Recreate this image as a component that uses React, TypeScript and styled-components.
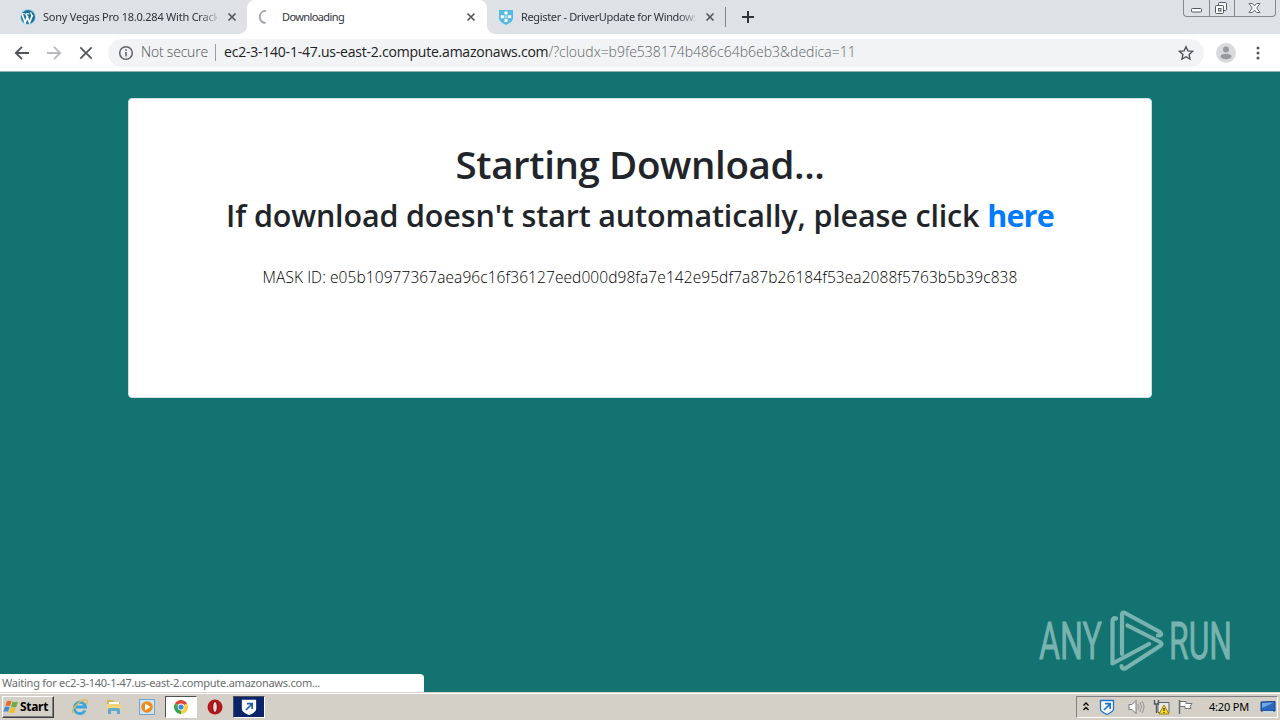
import React from 'react';
import styled, { createGlobalStyle } from 'styled-components';

const GlobalStyle = createGlobalStyle`
  * {
    box-sizing: border-box;
  }

  body {
    margin: 0;
    overflow: hidden;
    font-family: 'Open Sans', 'Noto Sans', sans-serif;
  }
`;

// Styled components
const Screen = styled.div`
  display: flex;
  flex-direction: column;
  width: 1280px;
  height: 720px;
  background: #fff;
`;

const TabStrip = styled.div`
  display: flex;
  height: 34px;
  background: #dee1e6;
`;

const Tab = styled.div<{ $width: number; $left: number; $right: number; $active?: boolean }>`
  display: flex;
  align-items: center;
  width: ${(props) => props.$width}px;
  height: 34px;
  padding: 0 ${(props) => props.$right}px 0 ${(props) => props.$left}px;
  border-radius: 8px 8px 0 0;
  background: ${(props) => (props.$active ? '#fff' : 'transparent')};
`;

// the corner of an idle tab curves into the active one
const TabFoot = styled.div<{ $side: 'left' | 'right' }>`
  width: 8px;
  height: 34px;
  background: radial-gradient(
      circle at ${(props) => (props.$side === 'left' ? '0 0' : '100% 0')},
      transparent 7.5px,
      #fff 8px
    )
    0 26px / 8px 8px no-repeat;
`;

const TabIcon = styled.svg`
  flex: none;
  width: 16px;
  height: 16px;
`;

const TabTitle = styled.div<{ $gap: number; $spacing: number; $fade?: boolean }>`
  flex: none;
  width: 174px;
  margin-left: ${(props) => props.$gap}px;
  overflow: hidden;
  white-space: nowrap;
  font: 11px/16px 'Noto Sans', sans-serif;
  letter-spacing: ${(props) => props.$spacing}px;
  color: #303338;
  mask-image: ${(props) =>
    props.$fade ? 'linear-gradient(90deg, #000 90%, rgba(0, 0, 0, 0.2))' : 'none'};
`;

const TabClose = styled.svg`
  flex: none;
  width: 10px;
  height: 10px;
  margin-left: auto;
`;

const TabDivider = styled.div`
  width: 1px;
  height: 20px;
  margin: 7px 15px 0 0;
  background: #808388;
`;

const NewTab = styled.svg`
  width: 14px;
  height: 14px;
  margin-top: 10px;
`;

const WindowButtons = styled.div`
  display: flex;
  height: 17px;
  margin: 0 4px 0 auto;
  border: 1px solid #85888d;
  border-top: 0;
  border-radius: 0 0 4px 4px;
`;

const WindowButton = styled.div<{ $width: number }>`
  display: flex;
  justify-content: center;
  width: ${(props) => props.$width}px;

  & + & {
    border-left: 1px solid #85888d;
  }
`;

const Toolbar = styled.div`
  display: flex;
  align-items: center;
  height: 38px;
  padding-left: 14px;
  border-bottom: 1px solid #8eb2b2;
  background: #fff;
`;

const NavIcon = styled.svg`
  width: 16px;
  height: 16px;
  margin-right: 16px;
`;

const AddressBar = styled.div`
  display: flex;
  align-items: center;
  width: 1096px;
  height: 28px;
  margin-left: -2px;
  padding: 0 10px;
  border-radius: 14px;
  background: #f1f3f4;
  font-size: 14px;
  font-weight: 300;
  white-space: nowrap;
`;

const NotSecure = styled.span`
  width: 68px;
  margin-left: 7px;
  padding-bottom: 2px;
  letter-spacing: -0.2px;
  color: #4e5257;
`;

const AddressDivider = styled.div`
  width: 1px;
  height: 17px;
  margin: 0 8px 0 6px;
  background: #9a9da1;
`;

const Url = styled.span`
  padding-bottom: 2px;
  letter-spacing: 0;
  color: #5f6368;
`;

const UrlHost = styled.span`
  font-weight: 400;
  letter-spacing: -0.22px;
  color: #202124;
`;

const Star = styled.svg`
  width: 16px;
  height: 16px;
  margin-left: auto;
`;

const Avatar = styled.svg`
  width: 20px;
  height: 20px;
  margin: 0 19px 0 12px;
`;

const Menu = styled.svg`
  width: 6px;
  height: 16px;
`;

const Page = styled.main`
  position: relative;
  display: flex;
  justify-content: center;
  height: 620px;
  padding-top: 26px;
  background: #127370;
`;

const Card = styled.section`
  width: 1024px;
  height: 300px;
  padding-top: 41px;
  border: 1px solid #cfe0df;
  border-radius: 4px;
  background: #fff;
  text-align: center;
  white-space: nowrap;
  color: #212529;
`;

const Title = styled.h1`
  margin: 0 0 8px;
  font-size: 38.5px;
  font-weight: 600;
  line-height: 48px;
  letter-spacing: -0.4px;
`;

const Subtitle = styled.h2`
  margin: 0;
  font-size: 30.5px;
  font-weight: 600;
  line-height: 38px;
  letter-spacing: -0.16px;
`;

const HereLink = styled.a`
  font-weight: 700;
  letter-spacing: -0.8px;
  color: #007bff;
`;

const MaskId = styled.p`
  margin: 31px 0 0;
  font-size: 15.5px;
  font-weight: 300;
  line-height: 24px;
  letter-spacing: 0.08px;
  color: #000;
`;

const Watermark = styled.svg`
  position: absolute;
  left: 1020px;
  top: 528px;
  width: 240px;
  height: 90px;
  overflow: visible;
`;

const StatusBubble = styled.div`
  position: absolute;
  left: 0;
  bottom: 0;
  width: 424px;
  height: 18px;
  padding-left: 2px;
  border-radius: 0 4px 0 0;
  background: #fff;
  font: 11px/18px 'Noto Sans', sans-serif;
  letter-spacing: -0.25px;
  color: #6a6d70;
`;

const Taskbar = styled.footer`
  display: flex;
  height: 28px;
  padding: 3px 2px 0;
  border-top: 1px solid #d6d2ca;
  background: #d4d0c8;
  box-shadow: inset 0 1px #fff;
`;

const StartButton = styled.div`
  display: flex;
  align-items: center;
  width: 52px;
  height: 22px;
  margin-right: 14px;
  padding-bottom: 1px;
  border: 1px solid;
  border-color: #fff #404040 #404040 #fff;
  box-shadow: inset -1px -1px #808080;
  font: bold 12px 'Noto Sans', sans-serif;
  letter-spacing: -0.3px;
  color: #000;
`;

const StartFlag = styled.svg`
  flex: none;
  width: 17px;
  height: 18px;
`;

const TaskItem = styled.div<{ $width: number; $gap?: number; $pressed?: boolean; $background?: string }>`
  display: flex;
  align-items: center;
  justify-content: center;
  width: ${(props) => props.$width}px;
  height: 22px;
  margin-left: ${(props) => props.$gap || 0}px;
  border: 1px solid;
  border-color: ${(props) => (props.$pressed ? '#505050 #fff #fff #505050' : 'transparent')};
  background: ${(props) => props.$background || 'transparent'};
`;

const TaskIcon = styled.svg`
  width: 18px;
  height: 18px;
`;

const Tray = styled.div`
  display: flex;
  align-items: center;
  width: 202px;
  height: 22px;
  margin-left: auto;
  padding-left: 6px;
  border: 1px solid;
  border-color: #808080 #fff #fff #808080;
`;

const TrayIcon = styled.svg<{ $width: number; $gap: number }>`
  flex: none;
  width: ${(props) => props.$width}px;
  height: 18px;
  margin-right: ${(props) => props.$gap}px;
`;

const Clock = styled.span`
  width: 42px;
  margin-right: 9px;
  padding-bottom: 1px;
  font: 11px 'Noto Sans', sans-serif;
  letter-spacing: -0.2px;
  white-space: nowrap;
  color: #000;
`;

const CloseMark: React.FC = () => (
  <TabClose viewBox="0 0 10 10">
    <path d="M1.5 1.5l7 7M8.5 1.5l-7 7" stroke="#55585c" strokeWidth="1.7" />
  </TabClose>
);

interface ShieldArrowProps {
  stroke: string;
  arrow: string;
}

const ShieldArrow: React.FC<ShieldArrowProps> = ({ stroke, arrow }) => (
  <>
    <path d="M2.5 2.5h13v8.5c0 2.5-3 4-6.5 5.5C5.5 15 2.5 13.5 2.5 11z" fill="#fff" stroke={stroke} strokeWidth="1.3" />
    <path d="M6 12l5.5-5.5M7 5.7h5.2V11" fill="none" stroke={arrow} strokeWidth="1.7" />
  </>
);

const Tabs: React.FC = () => (
  <TabStrip>
    <Tab $width={239} $left={20} $right={2}>
      <TabIcon viewBox="0 0 16 16">
        <circle cx="8" cy="8" r="8" fill="#a9d5e7" />
        <circle cx="8" cy="8" r="7" fill="#1e7299" />
        <path d="M2 5l3.2 8.5L7.7 7M6 5l3.5 8.5L12.5 6" fill="none" stroke="#fff" strokeWidth="1.7" />
        <path d="M1.5 4.8h3.8M6 4.8h3.5" stroke="#fff" strokeWidth="1" />
        <path d="M11 3.3c-.8 1.5 1.3 2.2 1.2 4" fill="none" stroke="#fff" strokeWidth="1.2" />
      </TabIcon>
      <TabTitle $gap={7} $spacing={-0.23} $fade>
        Sony Vegas Pro 18.0.284 With Crack
      </TabTitle>
      <CloseMark />
    </Tab>
    <TabFoot $side="left" />
    <Tab $width={240} $left={10} $right={11} $active>
      <TabIcon viewBox="0 0 16 16">
        <path d="M9 2C5 1.5 2.5 5 2.700 8.500Q3.500 13.500 8.500 14" fill="none" stroke="#a1a4a8" strokeWidth="1.8" />
      </TabIcon>
      <TabTitle $gap={9} $spacing={-0.6}>
        Downloading
      </TabTitle>
      <CloseMark />
    </Tab>
    <TabFoot $side="right" />
    <Tab $width={230} $left={3} $right={10}>
      <TabIcon viewBox="0 0 16 16">
        <path d="M1 1h14v8c0 3-3 5-7 7-4-2-7-4-7-7z" fill="#55b9e2" />
        <path d="M6.5 2.5h3v3h-3zM2.8 6.3h3v3h-3zM10.2 6.3h3v3h-3zM6.5 10h3v3h-3z" fill="#fff" />
        <path d="M6.5 6.3h3v3h-3z" fill="#a9dcf1" />
      </TabIcon>
      <TabTitle $gap={7} $spacing={-0.34} $fade>
        Register - DriverUpdate for Windows
      </TabTitle>
      <CloseMark />
    </Tab>
    <TabDivider />
    <NewTab viewBox="0 0 14 14">
      <path d="M7 1v12M1 7h12" stroke="#303337" strokeWidth="2" />
    </NewTab>
    <WindowButtons>
      <WindowButton $width={25}>
        <svg width="13" height="16">
          <rect x="1.5" y="8.5" width="10" height="3.5" rx="1" fill="#fff" stroke="#55585e" />
        </svg>
      </WindowButton>
      <WindowButton $width={25}>
        <svg width="16" height="16">
          <rect x="4.5" y="2.5" width="8" height="8" rx="1" fill="#f5f6f7" stroke="#55585e" />
          <rect x="1.5" y="5.5" width="8" height="8" rx="1" fill="#fff" stroke="#55585e" />
          <rect x="4.5" y="8.5" width="2.5" height="2.5" fill="#dee1e6" stroke="#55585e" />
        </svg>
      </WindowButton>
      <WindowButton $width={41}>
        <svg width="15" height="16">
          <path d="M1 3.5h3.5l2 2.5 2-2.5H12L8.7 8l3.3 4.5H8.5l-2-2.5-2 2.5H1L4.3 8z" fill="#fff" stroke="#666970" />
        </svg>
      </WindowButton>
    </WindowButtons>
  </TabStrip>
);

const BrowserToolbar: React.FC = () => (
  <Toolbar>
    <NavIcon viewBox="0 0 16 16">
      <path d="M15 8H2M8 1.8L1.8 8 8 14.2" fill="none" stroke="#505357" strokeWidth="1.8" />
    </NavIcon>
    <NavIcon viewBox="0 0 16 16">
      <path d="M1 8h13M8 1.8L14.2 8 8 14.2" fill="none" stroke="#b9bbbe" strokeWidth="1.8" />
    </NavIcon>
    <NavIcon viewBox="0 0 16 16">
      <path d="M2.3 2.3l11.4 11.4M13.7 2.3L2.3 13.7" stroke="#505357" strokeWidth="1.7" />
    </NavIcon>
    <AddressBar>
      <svg width="16" height="16" viewBox="0 0 16 16">
        <circle cx="8" cy="8" r="6.3" fill="none" stroke="#5f6368" strokeWidth="1.5" />
        <path d="M8 4.2v1.6M8 7v4.6" stroke="#5f6368" strokeWidth="1.6" />
      </svg>
      <NotSecure>Not secure</NotSecure>
      <AddressDivider />
      <Url>
        <UrlHost>ec2-3-140-1-47.us-east-2.compute.amazonaws.com</UrlHost>
        /?cloudx=b9fe538174b486c64b6eb3&amp;dedica=11
      </Url>
      <Star viewBox="0 0 16 16">
        <path d="M8 1.7l1.9 4.2 4.6.5-3.4 3.1.9 4.5-4-2.3L4 14l.9-4.5L1.5 6.4l4.6-.5z" fill="none" stroke="#505459" strokeWidth="1.4" />
      </Star>
    </AddressBar>
    <Avatar viewBox="0 0 20 20">
      <circle cx="10" cy="10" r="10" fill="#d9dadc" />
      <circle cx="10" cy="6.5" r="3" fill="#97999c" />
      <ellipse cx="10" cy="13.5" rx="5.5" ry="2.7" fill="#97999c" />
    </Avatar>
    <Menu viewBox="0 0 6 16">
      <circle cx="3" cy="3" r="1.5" fill="#55585c" />
      <circle cx="3" cy="8" r="1.5" fill="#55585c" />
      <circle cx="3" cy="13" r="1.5" fill="#55585c" />
    </Menu>
  </Toolbar>
);

const AnyRunMark: React.FC = () => (
  <Watermark viewBox="0 0 240 90">
    <g fill="#79b3b0" stroke="#79b3b0" strokeWidth="0.8" fontFamily="Roboto, sans-serif" fontSize="52">
      <text x="19" y="59" textLength="63" lengthAdjust="spacingAndGlyphs">ANY</text>
      <text x="149" y="59" textLength="63" lengthAdjust="spacingAndGlyphs">RUN</text>
    </g>
    <g fill="none" stroke="#79b3b0" strokeWidth="4.2" strokeLinecap="round" strokeLinejoin="round">
      <path d="M96 18.5Q92.5 17 92.5 22V63.5L129 44" />
      <path d="M102 54V14.5Q102 11.5 105 13L140 32Q143 35.5 138 35.5" />
      <path d="M107.5 25.5L140 42Q143 44 140 46L106 68Q102 70 101.5 66" />
    </g>
  </Watermark>
);

const SystemTaskbar: React.FC = () => (
  <Taskbar>
    <StartButton>
      <StartFlag viewBox="0 0 18 18">
        <path d="M4 3q3-1.5 5 0L7.5 8q-2.5-1-5 0z" fill="#e66b25" />
        <path d="M10 3.5q2.5 1 6 0L14 9q-3 1-5.5-.5z" fill="#72ac42" />
        <path d="M2 9q2.5-1 5 0l-1.5 5q-2-1.2-5 0z" fill="#4189d5" />
        <path d="M8 9.5q3 1.3 5.5.5L12 15q-3 .8-5.5-.5z" fill="#f5bd24" />
      </StartFlag>
      Start
    </StartButton>
    <TaskItem $width={24}>
      <TaskIcon viewBox="0 0 18 18">
        <path d="M14 12.5A5.7 5.7 0 1 1 14.5 9H5" fill="none" stroke="#3aa5dd" strokeWidth="2.8" />
        <path d="M2 15.5C-1 10 12 0 16 2.5q1 1-.5 3.5" fill="none" stroke="#e7b942" strokeWidth="1.3" />
      </TaskIcon>
    </TaskItem>
    <TaskItem $width={43}>
      <TaskIcon viewBox="0 0 18 18">
        <path d="M2 2h6l1 2h6v9H2z" fill="#ddb44c" />
        <path d="M4 4h10v5H4z" fill="#fff" />
        <path d="M2 6h14v6H2z" fill="#f3d577" />
        <path d="M3 16v-4q0-2 2-2h8q2 0 2 2v4h-3v-3H6v3z" fill="#5fa8d0" />
      </TaskIcon>
    </TaskItem>
    <TaskItem $width={24}>
      <TaskIcon viewBox="0 0 18 18">
        <rect x="1.5" y="1.5" width="15" height="15" fill="#cce5f6" stroke="#6aa7d5" />
        <circle cx="9" cy="9" r="5.8" fill="#f18a17" />
        <path d="M7 5.5l5.5 3.5L7 12.5z" fill="#fff" />
      </TaskIcon>
    </TaskItem>
    <TaskItem $width={32} $gap={6} $pressed $background="#fff">
      <TaskIcon viewBox="0 0 18 18">
        <path d="M9 9L2.94 5.5A7 7 0 0 1 15.06 5.5z" fill="#df4638" />
        <path d="M9 9L2.94 5.5A7 7 0 0 0 9 16z" fill="#33a457" />
        <path d="M9 9l6.06-3.5A7 7 0 0 1 9 16z" fill="#f8cd36" />
        <circle cx="9" cy="9" r="3.4" fill="#fff" />
        <circle cx="9" cy="9" r="2.6" fill="#4285dc" />
      </TaskIcon>
    </TaskItem>
    <TaskItem $width={36}>
      <TaskIcon viewBox="0 0 18 18">
        <circle cx="9" cy="9" r="7.5" fill="#b5161c" />
        <ellipse cx="9" cy="9" rx="2.3" ry="5.5" fill="#e8dcda" stroke="#7c0b10" />
      </TaskIcon>
    </TaskItem>
    <TaskItem $width={32} $pressed $background="#0a246a">
      <TaskIcon viewBox="0 0 18 18">
        <ShieldArrow stroke="#fff" arrow="#1b62b0" />
      </TaskIcon>
    </TaskItem>
    <Tray>
      <TrayIcon $width={6} $gap={9} viewBox="0 0 6 18">
        <path d="M.5 7.5L3 5l2.5 2.5M.5 12L3 9.5 5.5 12" fill="none" stroke="#000" strokeWidth="1.3" />
      </TrayIcon>
      <TrayIcon $width={18} $gap={12} viewBox="0 0 18 18">
        <ShieldArrow stroke="#1b73ce" arrow="#1b73ce" />
      </TrayIcon>
      <TrayIcon $width={17} $gap={8} viewBox="0 0 17 18">
        <path d="M1 6.5h3l4-4v13l-4-4H1z" fill="#fff" stroke="#77797c" />
        <path d="M10 6q1.5 3 0 6M12 4q3 5 0 10M14 3q4 6 0 12" fill="none" stroke="#929497" />
      </TrayIcon>
      <TrayIcon $width={17} $gap={7} viewBox="0 0 17 18">
        <path d="M5 4.5h11v10H5z" fill="#e8e8e6" stroke="#626466" />
        <path d="M1.5 2v4h4V2M3.5 6v9" fill="none" stroke="#55585b" strokeWidth="1.4" />
        <path d="M11 7l5 9H6z" fill="#ffda22" stroke="#a28008" />
        <path d="M11 10v3M11 14v1" stroke="#000" />
      </TrayIcon>
      <TrayIcon $width={17} $gap={15} viewBox="0 0 17 18">
        <path d="M2.5 2v14" stroke="#696c6e" strokeWidth="1.5" />
        <path d="M3 3.5h6v2h6l-2 3 1 2H8v-2H3z" fill="#fff" stroke="#727578" />
      </TrayIcon>
      <Clock>4:20 PM</Clock>
      <TrayIcon $width={16} $gap={0} viewBox="0 0 16 18">
        <path d="M1 4l14-.5V13H1z" fill="#2869bd" stroke="#183f88" />
        <path d="M2 5l12-.5L2 10z" fill="#70a8e5" />
        <path d="M3 14h10" stroke="#c9d7e9" strokeWidth="2" />
      </TrayIcon>
    </Tray>
  </Taskbar>
);

const App: React.FC = () => {
  return (
    <Screen>
      <GlobalStyle />
      <Tabs />
      <BrowserToolbar />
      <Page>
        <Card>
          <Title>Starting Download...</Title>
          <Subtitle>
            If download doesn't start automatically, please click <HereLink>here</HereLink>
          </Subtitle>
          <MaskId>
            MASK ID: e05b10977367aea96c16f36127eed000d98fa7e142e95df7a87b26184f53ea2088f5763b5b39c838
          </MaskId>
        </Card>
        <AnyRunMark />
        <StatusBubble>Waiting for ec2-3-140-1-47.us-east-2.compute.amazonaws.com...</StatusBubble>
      </Page>
      <SystemTaskbar />
    </Screen>
  );
};

export default App;
